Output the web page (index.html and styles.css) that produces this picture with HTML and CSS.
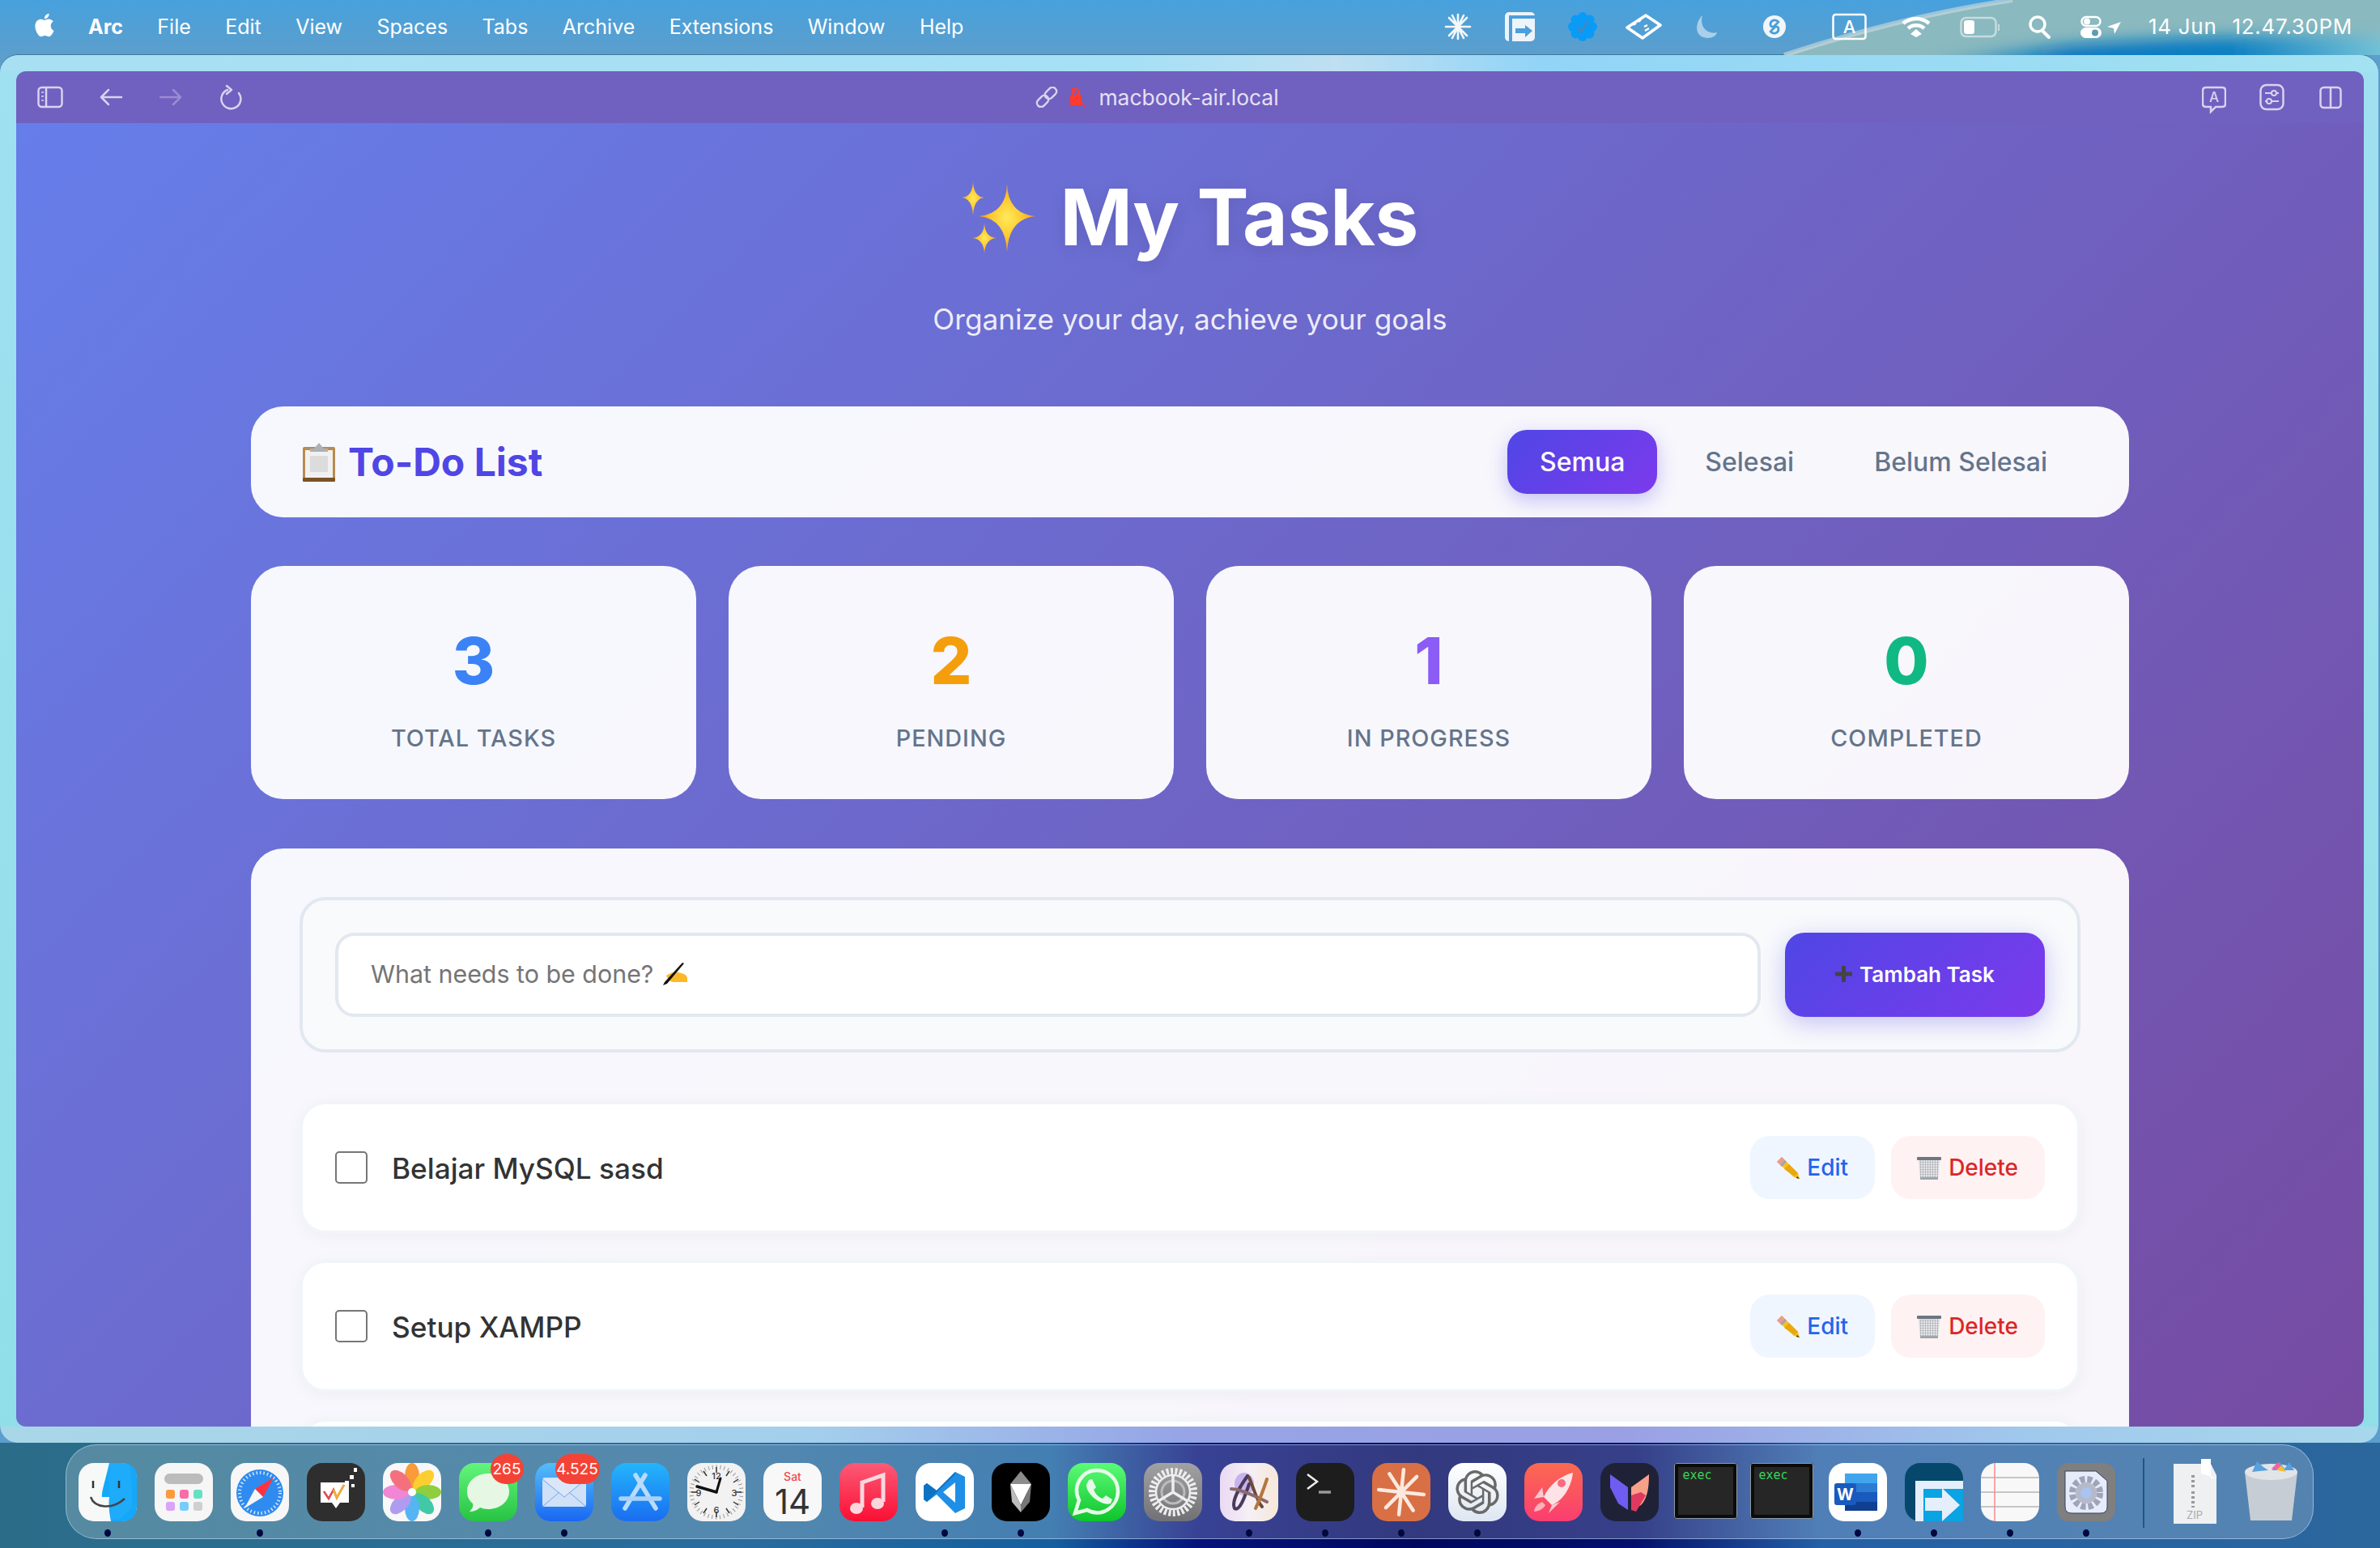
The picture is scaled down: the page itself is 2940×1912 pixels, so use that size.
FILE: index.html
```html
<!DOCTYPE html>
<html lang="en">
<head>
<meta charset="utf-8">
<title>My Tasks</title>
<link rel="stylesheet" href="styles.css">
</head>
<body>
<div class="desktop">
  <header class="menubar">
    <svg class="band" width="2940" height="68" viewBox="0 0 2940 68"><defs><filter id="soft" x="-20%" y="-100%" width="140%" height="300%"><feGaussianBlur stdDeviation="9"/></filter><linearGradient id="swoosh" x1="0" y1="0" x2="1" y2="0"><stop offset="0" stop-color="#0878c0" stop-opacity="0"/><stop offset=".3" stop-color="#0878c0"/><stop offset=".65" stop-color="#0f80c2"/><stop offset="1" stop-color="#7cc8d8"/></linearGradient></defs><path d="M2204 68C2290 40 2390 14 2486 0H2940V68Z" fill="#8ab9bf"/><path d="M2380 76C2540 50 2760 40 2960 46V90H2380Z" fill="url(#swoosh)" filter="url(#soft)"/><path d="M2204 68C2290 40 2390 14 2486 0" fill="none" stroke="#cfdde0" stroke-width="6" opacity=".6"/></svg>
    <svg class="apple" width="26" height="30" viewBox="3 1.5 18 21"><path fill="#fff" d="M18.71 19.5c-.83 1.24-1.71 2.45-3.05 2.47-1.34.03-1.77-.79-3.29-.79-1.53 0-2 .77-3.27.82-1.31.05-2.3-1.32-3.14-2.53C4.25 17 2.94 12.45 4.7 9.39c.87-1.52 2.43-2.48 4.12-2.51 1.28-.02 2.5.87 3.29.87.78 0 2.26-1.07 3.81-.91.65.03 2.47.26 3.64 1.98-.09.06-2.17 1.28-2.15 3.81.03 3.02 2.65 4.03 2.68 4.04-.03.07-.42 1.44-1.38 2.83M13 3.5c.73-.83 1.94-1.46 2.94-1.5.13 1.17-.34 2.35-1.04 3.19-.69.85-1.83 1.51-2.95 1.42-.15-1.15.41-2.35 1.05-3.11z"/></svg>
    <nav class="menus"><b>Arc</b><span>File</span><span>Edit</span><span>View</span><span>Spaces</span><span>Tabs</span><span>Archive</span><span>Extensions</span><span>Window</span><span>Help</span></nav>
    <div class="status">
      <svg width="75" height="68" viewBox="0 0 75 68"><g stroke="#f4f8fb" stroke-width="2.600" stroke-linecap="round"><path d="M17 18V48M2 33H32M6 22L28 44M6 44L28 22M10 19L24 47M24 19L10 47"/></g></svg>
      <svg width="78" height="68" viewBox="0 0 78 68"><rect x="0" y="15" width="37" height="36" rx="5" fill="#eef4fa"/><path d="M37 21H7V51" fill="none" stroke="#4a9fdc" stroke-width="4"/><path d="M13 35H25V31L34 38L25 46V41H13Z" fill="#4a9fdc"/></svg>
      <svg width="71" height="68" viewBox="0 0 71 68"><g fill="#0a9bf7"><circle cx="18" cy="33" r="14"/><circle cx="18" cy="21" r="6"/><circle cx="18" cy="45" r="6"/><circle cx="6" cy="33" r="6"/><circle cx="30" cy="33" r="6"/><circle cx="9.500" cy="24.500" r="6"/><circle cx="26.500" cy="24.500" r="6"/><circle cx="9.500" cy="41.500" r="6"/><circle cx="26.500" cy="41.500" r="6"/></g><path fill="none" stroke="#4388bf" stroke-width="3" d="M12 33L16 39L25 26"/></svg>
      <svg width="84" height="68" viewBox="0 0 84 68"><path fill="none" stroke="#fff" stroke-width="3.600" stroke-linejoin="round" d="M25 19L43 31L21 47L2 34Z"/><path d="M10 31L13 29M16 27L19 25" stroke="#fff" stroke-width="2"/><path d="M23 33L27 31M24 38L29 35" stroke="#fff" stroke-width="2.400"/></svg>
      <svg width="86" height="68" viewBox="0 0 86 68"><path fill="#a9d0e8" d="M11 19C2 27 0 46 17 47C24 47 28 44 29 40C17 43 7 33 11 19Z"/></svg>
      <svg width="85" height="68" viewBox="0 0 85 68"><circle cx="14" cy="33" r="14" fill="#f2f6fa"/><path fill="none" stroke="#4a9fdc" stroke-width="2.800" stroke-linecap="round" d="M19 27C15 23 9 25 9 30C9 33 12 34 14 32L18 28M9 39C13 43 19 41 19 36C19 33 16 32 14 34L10 38"/></svg>
      <svg width="86" height="68" viewBox="0 0 86 68"><rect x="1.500" y="18" width="40" height="30" rx="3" fill="none" stroke="#fff" stroke-width="2.500"/><text x="21.500" y="41" class="ltr">A</text></svg>
      <svg width="72" height="68" viewBox="0 0 72 68"><g fill="none" stroke="#fff" stroke-width="4.500"><path d="M2 29A24 24 0 0 1 34 29"/><path d="M8 35A15 15 0 0 1 28 35"/></g><path fill="#fff" d="M18 36L25 42L18 46L11 42Z"/></svg>
      <svg width="85" height="68" viewBox="0 0 85 68"><rect x="1.500" y="22" width="43" height="23" rx="6" fill="none" stroke="#c5dce0" stroke-width="2.500"/><rect x="5" y="25" width="13" height="17" rx="3" fill="#fff"/><rect x="47" y="30" width="2" height="8" fill="#c5dce0"/></svg>
      <svg width="64" height="68" viewBox="0 0 64 68"><circle cx="11" cy="30" r="9" fill="none" stroke="#fff" stroke-width="3.500"/><path d="M17 38L25 46" stroke="#fff" stroke-width="4" stroke-linecap="round"/></svg>
      <svg width="84" height="68" viewBox="0 0 84 68"><rect x="1.500" y="21" width="23" height="11" rx="5.500" fill="none" stroke="#fff" stroke-width="2.500"/><circle cx="8" cy="26.500" r="4" fill="#fff"/><rect x="0" y="34" width="26" height="13" rx="6.500" fill="#fff"/><circle cx="18" cy="40.500" r="4" fill="#5d9cb5"/><path fill="#fff" d="M50 27L33 33L41 35L42 42Z"/></svg>
      <time class="clock"><span>14 Jun</span><span>12.47.30PM</span></time>
    </div>
  </header>

  <section class="window">
    <div class="browser">
      <div class="toolbar">
        <div class="tools">
          <svg width="76" height="64" viewBox="0 0 76 64"><rect x="1.500" y="20" width="29" height="24" rx="4" fill="none" stroke="#d9d2f0" stroke-width="2.500"/><path d="M11 20V44" stroke="#d9d2f0" stroke-width="2.500"/><path d="M5 26H8M5 31H8M5 36H8" stroke="#d9d2f0" stroke-width="1.500"/></svg>
          <svg width="75" height="64" viewBox="0 0 75 64"><path d="M3 32H28M12 23L3 32L12 41" fill="none" stroke="#d9d2f0" stroke-width="2.500" stroke-linecap="round" stroke-linejoin="round"/></svg>
          <svg width="74" height="64" viewBox="0 0 74 64"><path d="M1 32H26M17 23L26 32L17 41" fill="none" stroke="#9a8bd4" stroke-width="2.500" stroke-linecap="round" stroke-linejoin="round"/></svg>
          <svg width="30" height="64" viewBox="0 0 30 64"><path d="M10 23A12 12 0 1 0 24 27M9 18L15 23L9 28" fill="none" stroke="#d9d2f0" stroke-width="2.500" stroke-linecap="round" stroke-linejoin="round"/></svg>
        </div>
        <div class="url">
          <svg width="28" height="26" viewBox="0 0 28 26"><g fill="none" stroke="#d9d2f0" stroke-width="2.500" transform="rotate(-45 14 13)"><rect x="-1" y="8" width="16" height="10" rx="5"/><rect x="13" y="8" width="16" height="10" rx="5"/></g></svg>
          <svg class="lock" width="22" height="24" viewBox="0 0 22 24"><rect x="2" y="10" width="14" height="12" fill="#ff3b30"/><path d="M5 10V6A4 4 0 0 1 13 6V10" fill="none" stroke="#ff3b30" stroke-width="2.500"/><path d="M4 0L20 24" stroke="#ff3b30" stroke-width="1.500"/></svg>
          <span>macbook-air.local</span>
        </div>
        <div class="tools tools-right">
          <svg width="30" height="64" viewBox="0 0 30 64"><path d="M5 20H25Q29 20 29 24V40Q29 44 25 44H17L11 50V44H5Q1 44 1 40V24Q1 20 5 20Z" fill="none" stroke="#d9d2f0" stroke-width="2.500"/><text x="15" y="38" class="ltr-small">A</text></svg>
          <svg width="31" height="64" viewBox="0 0 31 64"><rect x="1.500" y="17" width="28" height="30" rx="7" fill="none" stroke="#d9d2f0" stroke-width="2.500"/><path d="M7 27H24M7 37H24" stroke="#d9d2f0" stroke-width="2"/><circle cx="18" cy="27" r="3" fill="#7060bf" stroke="#d9d2f0" stroke-width="2"/><circle cx="12" cy="37" r="3" fill="#7060bf" stroke="#d9d2f0" stroke-width="2"/></svg>
          <svg width="28" height="64" viewBox="0 0 28 64"><rect x="1.500" y="20" width="25" height="25" rx="4" fill="none" stroke="#d9d2f0" stroke-width="2.500"/><path d="M14 20V45" stroke="#d9d2f0" stroke-width="2.500"/></svg>
        </div>
      </div>

      <main class="page">
        <div class="container">
          <div class="hero">
            <h1 class="hero-title">
              <svg width="92" height="90" viewBox="0 0 92 90"><defs><radialGradient id="spark"><stop offset="0" stop-color="#ffe95c"/><stop offset=".55" stop-color="#ffc92e"/><stop offset="1" stop-color="#f39a1c"/></radialGradient></defs><path fill="url(#spark)" d="M56 4Q57 41 91 44Q58 47 56 88Q54 47 21 44Q55 41 56 4Z"/><path fill="url(#spark)" d="M14 1Q14.500 20 28 21Q15 22 14 43Q13 22 0 21Q13.500 20 14 1Z"/><path fill="url(#spark)" d="M28 52Q28.500 70 43 71Q29 72 28 90Q27 72 13 71Q27.500 70 28 52Z"/></svg>
              <span>My Tasks</span>
            </h1>
            <p class="hero-sub">Organize your day, achieve your goals</p>
          </div>

          <div class="panel header-card">
            <h2 class="list-title">
              <svg width="42" height="48" viewBox="0 0 42 48"><rect x="1" y="5" width="40" height="43" rx="2" fill="#b88c4f"/><rect x="1" y="43" width="40" height="5" rx="1" fill="#7a5428"/><rect x="4" y="9" width="34" height="34" fill="#f1f1f1"/><rect x="10" y="16" width="22" height="20" fill="#dcdcdc"/><path d="M21 0L27 7H32V11H10V7H15Z" fill="#aab1b8"/></svg>
              <span>To-Do List</span>
            </h2>
            <div class="filters">
              <a class="filter filter-active">Semua</a>
              <a class="filter">Selesai</a>
              <a class="filter">Belum Selesai</a>
            </div>
          </div>

          <div class="stats">
            <div class="panel stat"><div class="stat-num num-blue">3</div><div class="stat-label">Total Tasks</div></div>
            <div class="panel stat"><div class="stat-num num-amber">2</div><div class="stat-label">Pending</div></div>
            <div class="panel stat"><div class="stat-num num-violet">1</div><div class="stat-label">In Progress</div></div>
            <div class="panel stat"><div class="stat-num num-green">0</div><div class="stat-label">Completed</div></div>
          </div>

          <div class="panel main-card">
            <form class="add-form">
              <div class="add-input">
                <span>What needs to be done?</span>
                <svg width="31" height="28" viewBox="0 0 31 28"><path d="M5 16C10 12 16 11 20 12L24 13C27 14 30 15 31 19V24H14C10 24 7 21 5 16Z" fill="#fbb829"/><path d="M1 28L3 24L25 0L27 1L6 26Z" fill="#111"/></svg>
              </div>
              <button class="add-btn" type="button">
                <svg width="21" height="20" viewBox="0 0 21 20"><path d="M8 0H13V7.500H21V12.500H13V20H8V12.500H0V7.500H8Z" fill="#444"/></svg>
                <span>Tambah Task</span>
              </button>
            </form>

            <ul class="tasks">
              <li class="task">
                <input class="task-check" type="checkbox" aria-label="Belajar MySQL sasd">
                <span class="task-name">Belajar MySQL sasd</span>
                <div class="task-actions">
                  <a class="btn btn-edit"><svg width="29" height="28" viewBox="0 0 29 28"><path d="M1 7L7 1L27 21L29 28L22 26Z" fill="#f8c01c"/><path d="M1 7L7 1L11 5L5 11Z" fill="#e99a9a"/><path d="M5 11L11 5L13 7L7 13Z" fill="#9aa5ad"/><path d="M10 16L16 10L27 21L23 25Z" fill="#e8a80e"/><path d="M26 25L29 28L25 27Z" fill="#222"/></svg><span>Edit</span></a>
                  <a class="btn btn-del"><svg width="30" height="29" viewBox="0 0 30 29"><defs><pattern id="mesh" width="3" height="3" patternUnits="userSpaceOnUse"><rect width="3" height="3" fill="#e3e5e7"/><circle cx="1.500" cy="1.500" r=".9" fill="#9ea3a8"/></pattern></defs><path d="M2 4H28L26 29H4Z" fill="url(#mesh)"/><rect x="0" y="1" width="30" height="4" rx="1" fill="#6d7780"/><rect x="4" y="26" width="22" height="3" rx="1" fill="#9fa6ac"/></svg><span>Delete</span></a>
                </div>
              </li>
              <li class="task">
                <input class="task-check" type="checkbox" aria-label="Setup XAMPP">
                <span class="task-name">Setup XAMPP</span>
                <div class="task-actions">
                  <a class="btn btn-edit"><svg width="29" height="28" viewBox="0 0 29 28"><path d="M1 7L7 1L27 21L29 28L22 26Z" fill="#f8c01c"/><path d="M1 7L7 1L11 5L5 11Z" fill="#e99a9a"/><path d="M5 11L11 5L13 7L7 13Z" fill="#9aa5ad"/><path d="M10 16L16 10L27 21L23 25Z" fill="#e8a80e"/><path d="M26 25L29 28L25 27Z" fill="#222"/></svg><span>Edit</span></a>
                  <a class="btn btn-del"><svg width="30" height="29" viewBox="0 0 30 29"><path d="M2 4H28L26 29H4Z" fill="url(#mesh)"/><rect x="0" y="1" width="30" height="4" rx="1" fill="#6d7780"/><rect x="4" y="26" width="22" height="3" rx="1" fill="#9fa6ac"/></svg><span>Delete</span></a>
                </div>
              </li>
              <li class="task"></li>
            </ul>
          </div>
        </div>
      </main>
    </div>
  </section>

  <footer class="dock">
    <div class="cell on"><svg class="ico" viewBox="0 0 72 72"><rect width="72" height="72" rx="19" fill="#f7f8f8"/><path d="M38 0H53Q72 0 72 19V53Q72 72 53 72H40C38 62 37 52 38 42H29C28 36 33 22 38 0Z" fill="#14a8fb"/><path d="M38 0H53Q60 0 64 4L66 30V55L50 70H40C38 62 37 52 38 42Z" fill="#27aef9" opacity=".5"/><path d="M15 42C20 56 42 58 57 44" fill="none" stroke="#444" stroke-width="2.500"/><path d="M18 22V31M50 22V31" stroke="#333" stroke-width="2.500"/></svg></div>
    <div class="cell"><svg class="ico" viewBox="0 0 72 72"><rect width="72" height="72" rx="19" fill="#f6f6f6"/><rect x="12" y="13" width="48" height="13" rx="6.500" fill="#bcbcbc"/><g><rect x="14" y="33" width="11" height="11" rx="3" fill="#fb9a3c"/><rect x="31" y="33" width="11" height="11" rx="3" fill="#f76ca9"/><rect x="48" y="33" width="11" height="11" rx="3" fill="#66e0c4"/><rect x="14" y="48" width="11" height="11" rx="3" fill="#d9a4f9"/><rect x="31" y="48" width="11" height="11" rx="3" fill="#77cdfa"/><rect x="48" y="48" width="11" height="11" rx="3" fill="#cfcfcf"/></g></svg></div>
    <div class="cell on"><svg class="ico" viewBox="0 0 72 72"><rect width="72" height="72" rx="19" fill="#f7f7f7"/><circle cx="36" cy="37" r="29" fill="#2f8bf0"/><circle cx="36" cy="37" r="25" fill="none" stroke="#d6e9fb" stroke-width="4" stroke-dasharray="1.500 3"/><path d="M53 18L30 32L40 42Z" fill="#ff3340"/><path d="M17 56L30 32L40 42Z" fill="#f5f5f5"/></svg></div>
    <div class="cell"><svg class="ico" viewBox="0 0 72 72"><rect width="72" height="72" rx="19" fill="#2e2e2e"/><path d="M17 24H52V49H41L36 56L31 49H17Z" fill="#fff"/><path d="M21 35L27 44L33 33L37 43L46 27" fill="none" stroke="#e0484f" stroke-width="2.500"/><path d="M33 33L37 43L46 27" fill="none" stroke="#f0b030" stroke-width="2.500"/><path d="M47 22h5v5h-5zM53 15h5v5h-5zM55 26h4v4h-4zM58 6h4v5h-4z" fill="#fff"/></svg></div>
    <div class="cell"><svg class="ico" viewBox="0 0 72 72"><rect width="72" height="72" rx="19" fill="#f8f8f8"/><g transform="translate(36 36)" opacity=".85"><ellipse cy="-20" rx="9" ry="16" fill="#f98b17"/><ellipse cy="-20" rx="9" ry="16" fill="#fdc70e" transform="rotate(45)"/><ellipse cy="-20" rx="9" ry="16" fill="#7dc81e" transform="rotate(90)"/><ellipse cy="-20" rx="9" ry="16" fill="#22c19a" transform="rotate(135)"/><ellipse cy="-20" rx="9" ry="16" fill="#3aa9f3" transform="rotate(180)"/><ellipse cy="-20" rx="9" ry="16" fill="#a38cf0" transform="rotate(225)"/><ellipse cy="-20" rx="9" ry="16" fill="#f073d0" transform="rotate(270)"/><ellipse cy="-20" rx="9" ry="16" fill="#f5596a" transform="rotate(315)"/><circle r="5" fill="#fff"/></g></svg></div>
    <div class="cell on"><svg class="ico" viewBox="0 0 72 72"><defs><linearGradient id="g-msg" x1="0" y1="0" x2="0" y2="1"><stop offset="0" stop-color="#63f57c"/><stop offset="1" stop-color="#28c343"/></linearGradient></defs><rect width="72" height="72" rx="19" fill="url(#g-msg)"/><path d="M36 13C50 13 62 22 62 35C62 48 50 57 36 57C32 57 29 56 26 55C23 58 18 60 13 60C16 57 18 54 17 50C12 46 10 41 10 35C10 22 22 13 36 13Z" fill="#e6f8e4"/></svg><b class="badge">265</b></div>
    <div class="cell on"><svg class="ico" viewBox="0 0 72 72"><defs><linearGradient id="g-mail" x1="0" y1="0" x2="0" y2="1"><stop offset="0" stop-color="#55bdf8"/><stop offset="1" stop-color="#1967f2"/></linearGradient></defs><rect width="72" height="72" rx="19" fill="url(#g-mail)"/><rect x="9" y="18" width="54" height="36" rx="3" fill="#cfe0f7"/><path d="M9 20L36 42L63 20" fill="#dbe7f9" stroke="#6fa6ee"/><path d="M9 54L30 36M63 54L42 36" stroke="#6fa6ee" fill="none"/></svg><b class="badge badge-wide">4.525</b></div>
    <div class="cell"><svg class="ico" viewBox="0 0 72 72"><defs><linearGradient id="g-app" x1="0" y1="0" x2="0" y2="1"><stop offset="0" stop-color="#24b5fb"/><stop offset="1" stop-color="#1a6df0"/></linearGradient></defs><rect width="72" height="72" rx="19" fill="url(#g-app)"/><g stroke-width="5.500" stroke-linecap="round" fill="none"><path d="M42 15L17 56M30 15L55 56" stroke="#b8dcfb"/><path d="M12 44H60" stroke="#a9d2fa"/></g></svg></div>
    <div class="cell"><svg class="ico" viewBox="0 0 72 72"><rect width="72" height="72" rx="19" fill="#f2f2f2"/><circle cx="36" cy="36" r="31" fill="none" stroke="#999" stroke-width="5" stroke-dasharray="1 3.850"/><path d="M36 5V12M36 60V67M5 36H12M60 36H67M20 10L24 16M52 10L48 16M20 62L24 56M52 62L48 56M9 20L15 24M63 20L57 24M9 52L15 48M63 52L57 48" stroke="#333" stroke-width="1.500"/><text x="36" y="20" class="clk">12</text><text x="58" y="41" class="clk">3</text><text x="36" y="62" class="clk">6</text><text x="14" y="41" class="clk">9</text><path d="M36 36L12 29" stroke="#111" stroke-width="3.500" stroke-linecap="round"/><path d="M36 36L41 19" stroke="#111" stroke-width="3" stroke-linecap="round"/></svg></div>
    <div class="cell"><svg class="ico" viewBox="0 0 72 72"><rect width="72" height="72" rx="19" fill="#f8f8f8"/><text x="36" y="22" class="cal-day">Sat</text><text x="36" y="63" class="cal-num">14</text></svg></div>
    <div class="cell"><svg class="ico" viewBox="0 0 72 72"><defs><linearGradient id="g-mus" x1="0" y1="0" x2="0" y2="1"><stop offset="0" stop-color="#fb5b76"/><stop offset="1" stop-color="#fb0f34"/></linearGradient></defs><rect width="72" height="72" rx="19" fill="url(#g-mus)"/><path d="M28 24L54 15V48" fill="none" stroke="#fbd7dd" stroke-width="5"/><path d="M28 22V55" stroke="#fbd7dd" stroke-width="5"/><ellipse cx="21" cy="56" rx="8" ry="7" fill="#fbd7dd"/><ellipse cx="47" cy="50" rx="8" ry="7" fill="#fbd7dd"/></svg></div>
    <div class="cell on"><svg class="ico" viewBox="0 0 72 72"><rect width="72" height="72" rx="19" fill="#fff"/><path d="M49 11L61 17V56L49 62L26 39L14 48L10 45V28L14 25L26 34ZM49 24L34 36L49 49Z" fill="#1d8fe6"/><path d="M49 11L26 34L14 25L10 28V45L14 48L49 14Z" fill="#0e72c4"/></svg></div>
    <div class="cell on"><svg class="ico" viewBox="0 0 72 72"><rect width="72" height="72" rx="19" fill="#000"/><path d="M36 10L49 26L36 28L23 26Z" fill="#8c8c8c"/><path d="M23 26L49 26L36 52Z" fill="#fff"/><path d="M49 26L47 48L36 61L36 52Z" fill="#777"/><path d="M23 26L36 52V61L25 48Z" fill="#bdbdbd"/></svg></div>
    <div class="cell"><svg class="ico" viewBox="0 0 72 72"><defs><linearGradient id="g-wa" x1="0" y1="0" x2="0" y2="1"><stop offset="0" stop-color="#5cfb78"/><stop offset="1" stop-color="#0dc52a"/></linearGradient></defs><rect width="72" height="72" rx="19" fill="url(#g-wa)"/><path d="M9 62L14 46C5 28 18 9 36 9C50 9 62 20 62 35C62 54 42 68 24 58Z" fill="none" stroke="#e7fae9" stroke-width="4.500"/><path d="M26 21L30 20L35 30L32 33C34 38 38 42 43 44L47 40L55 45L53 50C44 54 23 40 23 27Z" fill="#e7fae9"/></svg></div>
    <div class="cell"><svg class="ico" viewBox="0 0 72 72"><defs><linearGradient id="g-set" x1="0" y1="0" x2="0" y2="1"><stop offset="0" stop-color="#a2a2a5"/><stop offset="1" stop-color="#717175"/></linearGradient></defs><rect width="72" height="72" rx="19" fill="url(#g-set)"/><circle cx="36" cy="36" r="26" fill="none" stroke="#eee" stroke-width="8" stroke-dasharray="3 2.400"/><circle cx="36" cy="36" r="21" fill="none" stroke="#eee" stroke-width="2.500"/><circle cx="36" cy="36" r="14" fill="none" stroke="#bbb" stroke-width="3"/><path d="M36 36V15M36 36L18 47M36 36L54 47" stroke="#eee" stroke-width="3.500"/></svg></div>
    <div class="cell on"><svg class="ico" viewBox="0 0 72 72"><defs><linearGradient id="g-ai" x1="0" y1="0" x2="1" y2="0"><stop offset="0" stop-color="#ead9f3"/><stop offset=".5" stop-color="#f5f0f5"/><stop offset="1" stop-color="#f6e7d9"/></linearGradient></defs><rect width="72" height="72" rx="19" fill="url(#g-ai)"/><ellipse cx="30" cy="26" rx="12" ry="14" fill="#c9b2ec"/><g fill="none" stroke-width="4" stroke-linecap="round"><path d="M34 16C24 30 14 48 18 56C24 60 30 44 36 26" stroke="#4a3a5c"/><path d="M36 18C42 32 46 48 52 54" stroke="#6a4a3a"/><path d="M14 32C26 32 46 42 58 48" stroke="#8a6a6a"/><path d="M58 20C54 32 48 48 44 56" stroke="#b5763c"/></g></svg></div>
    <div class="cell on"><svg class="ico" viewBox="0 0 72 72"><rect width="72" height="72" rx="19" fill="#1d1d1d"/><path d="M14 14L26 23L14 32" fill="none" stroke="#eee" stroke-width="2.500"/><path d="M28 36H43" stroke="#999" stroke-width="3.500"/></svg></div>
    <div class="cell on"><svg class="ico" viewBox="0 0 72 72"><rect width="72" height="72" rx="19" fill="#d96f45"/><g stroke="#fbe9df" stroke-linecap="round" stroke-width="4.500" transform="translate(36 36) rotate(6)"><path d="M0-28V28M-28 0H28M-17-21L17 21M-17 21L17-21"/></g></svg></div>
    <div class="cell on"><svg class="ico" viewBox="0 0 72 72"><defs><linearGradient id="g-gpt" x1="0" y1="0" x2="0" y2="1"><stop offset="0" stop-color="#fff"/><stop offset="1" stop-color="#dde6f2"/></linearGradient></defs><rect width="72" height="72" rx="19" fill="url(#g-gpt)"/><path transform="translate(9 9) scale(2.250)" fill="#696969" d="M22.2819 9.8211a5.9847 5.9847 0 0 0-.5157-4.9108 6.0462 6.0462 0 0 0-6.5098-2.9A6.0651 6.0651 0 0 0 4.9807 4.1818a5.9847 5.9847 0 0 0-3.9977 2.9 6.0462 6.0462 0 0 0 .7427 7.0966 5.98 5.98 0 0 0 .511 4.9107 6.051 6.051 0 0 0 6.5146 2.9001A5.9847 5.9847 0 0 0 13.2599 24a6.0557 6.0557 0 0 0 5.7718-4.2058 5.9894 5.9894 0 0 0 3.9977-2.9001 6.0557 6.0557 0 0 0-.7475-7.0729zm-9.022 12.6081a4.4755 4.4755 0 0 1-2.8764-1.0408l.1419-.0804 4.7783-2.7582a.7948.7948 0 0 0 .3927-.6813v-6.7369l2.02 1.1686a.071.071 0 0 1 .038.052v5.5826a4.504 4.504 0 0 1-4.4945 4.4944zm-9.6607-4.1254a4.4708 4.4708 0 0 1-.5346-3.0137l.142.0852 4.783 2.7582a.7712.7712 0 0 0 .7806 0l5.8428-3.3685v2.3324a.0804.0804 0 0 1-.0332.0615L9.74 19.9502a4.4992 4.4992 0 0 1-6.1408-1.6464zM2.3408 7.8956a4.485 4.485 0 0 1 2.3655-1.9728V11.6a.7664.7664 0 0 0 .3879.6765l5.8144 3.3543-2.0201 1.1685a.0757.0757 0 0 1-.071 0l-4.8303-2.7865A4.504 4.504 0 0 1 2.3408 7.872zm16.5963 3.8558L13.1038 8.364 15.1192 7.2a.0757.0757 0 0 1 .071 0l4.8303 2.7913a4.4944 4.4944 0 0 1-.6765 8.1042v-5.6772a.79.79 0 0 0-.407-.667zm2.0107-3.0231l-.142-.0852-4.7735-2.7818a.7759.7759 0 0 0-.7854 0L9.409 9.2297V6.8974a.0662.0662 0 0 1 .0284-.0615l4.8303-2.7866a4.4992 4.4992 0 0 1 6.6802 4.66zM8.3065 12.863l-2.02-1.1638a.0804.0804 0 0 1-.038-.0567V6.0742a4.4992 4.4992 0 0 1 7.3757-3.4537l-.142.0805L8.704 5.459a.7948.7948 0 0 0-.3927.6813zm1.0976-2.3654l2.602-1.4998 2.6069 1.4998v2.9994l-2.5974 1.4997-2.6067-1.4997Z"/></svg></div>
    <div class="cell"><svg class="ico" viewBox="0 0 72 72"><defs><linearGradient id="g-rkt" x1="0" y1="0" x2="0" y2="1"><stop offset="0" stop-color="#fb6a50"/><stop offset="1" stop-color="#fb3d70"/></linearGradient></defs><rect width="72" height="72" rx="19" fill="url(#g-rkt)"/><path d="M60 12C44 16 30 28 24 42L34 52C48 46 58 30 60 12Z" fill="#fde3e6"/><circle cx="46" cy="25" r="5" fill="#f76b80"/><path d="M24 42L12 44L22 30ZM34 52L30 62L44 48Z" fill="#fbc9d0"/><path d="M22 48C16 50 12 56 12 60C18 60 24 56 26 52Z" fill="#fdb0bb"/></svg></div>
    <div class="cell"><svg class="ico" viewBox="0 0 72 72"><rect width="72" height="72" rx="19" fill="#1f2236"/><path d="M12 14L34 30V58L22 50L12 30Z" fill="#6f5cf0"/><path d="M60 14L38 30V58L50 52C58 44 60 30 60 14Z" fill="#f9a08a"/><path d="M38 40L50 36L56 40L44 60L38 58Z" fill="#e0395f"/></svg></div>
    <div class="cell"><div class="exec"><span>exec</span></div></div>
    <div class="cell"><div class="exec"><span>exec</span></div></div>
    <div class="cell on"><svg class="ico" viewBox="0 0 72 72"><rect width="72" height="72" rx="19" fill="#fff"/><rect x="20" y="13" width="40" height="46" rx="3" fill="#2b7cd3"/><rect x="20" y="13" width="40" height="12" fill="#41a5ee"/><rect x="20" y="36" width="40" height="12" fill="#185abd"/><rect x="20" y="48" width="40" height="11" fill="#103f91"/><rect x="7" y="25" width="27" height="27" rx="3" fill="#185abd"/><text x="20.500" y="46" class="wrd">W</text></svg></div>
    <div class="cell on"><svg class="ico" viewBox="0 0 72 72"><rect width="72" height="72" rx="19" fill="#06486b"/><path d="M13 72V22H72V72Z" fill="#e4effb"/><path d="M23 32H72V72H23Z" fill="#0aa3e4"/><path d="M23 32V72H13V24H72V32Z" fill="#e4effb"/><path d="M25 43H46V31L68 52L46 72V59H25Z" fill="#e4effb"/><path d="M25 59V72H42V59Z" fill="#0aa3e4"/></svg></div>
    <div class="cell on"><svg class="ico" viewBox="0 0 72 72"><rect width="72" height="72" rx="19" fill="#f8f8f8"/><path d="M0 18H72M0 36H72M0 54H72" stroke="#c6c6c6" stroke-width="2"/><path d="M17 0V72" stroke="#f98c8c" stroke-width="1.500"/></svg></div>
    <div class="cell on"><svg class="ico" viewBox="0 0 72 72"><rect width="72" height="72" rx="14" fill="#7f7f7f"/><path d="M10 10H48L62 22V54Q62 62 54 62H18Q10 62 10 54Z" fill="#e6ecfa" stroke="#34405f" stroke-width="1"/><circle cx="36" cy="37" r="17" fill="none" stroke="#9fa4b8" stroke-width="8" stroke-dasharray="6 3"/><circle cx="36" cy="37" r="13" fill="#b5b9c9"/><circle cx="36" cy="37" r="7" fill="#a9c4ef"/></svg></div>
    <div class="divider"></div>
    <div class="cell"><svg class="file-ico" width="53" height="82" viewBox="0 0 53 82"><path d="M0 6H46L53 20V80H0Z" fill="#eef0f2"/><path d="M34 0H46V24H53L34 18Z" fill="#fff"/><path d="M24 20V36M24 40V60" stroke="#999" stroke-width="4" stroke-dasharray="3 3"/><text x="26" y="74" class="zip">ZIP</text></svg></div>
    <div class="cell"><svg class="file-ico" width="67" height="76" viewBox="0 0 67 76"><path d="M1 16H66L59 76H8Z" fill="#c7cdd4"/><ellipse cx="33.500" cy="16" rx="32.500" ry="10" fill="#e2e5e8"/><path d="M10 16L16 3L24 10L30 14ZM34 14L44 4L50 12L56 4L62 14Z" fill="#5aa0dc"/><path d="M34 12L42 4L50 14Z" fill="#f45fa4"/><path d="M40 14L46 8L52 16Z" fill="#f4c034"/></svg></div>
  </footer>
</div>
</body>
</html>
```

FILE: styles.css
```css
* { box-sizing: border-box; }

html, body {
  margin: 0;
  width: 2940px;
  height: 1912px;
  overflow: hidden;
}

body {
  font-family: Inter, "Liberation Sans", sans-serif;
  background:
    linear-gradient(90deg, #2b6d88 0, #2a6c9c 900px, #155f9f 1300px, #07137a 1480px, #00085e 1750px, #04106c 2020px, #2560a6 2250px, #2b669c 2940px) 0 1782px / 100% 130px no-repeat,
    linear-gradient(180deg, #47a1dd 0, #5c9ecc 68px);
}

.desktop {
  display: flex;
  flex-direction: column;
  height: 1912px;
}

/* menu bar */
.menubar {
  position: relative;
  display: flex;
  align-items: center;
  height: 68px;
  padding: 0 0 0 42px;
  color: #fff;
  font-size: 25px;
  line-height: 1;
  flex: none;
  overflow: hidden;
}
.band { position: absolute; left: 0; top: 0; }
.apple { position: relative; margin-top: -6px; flex: none; }
.menus {
  position: relative;
  display: flex;
  gap: 42.4px;
  margin-left: 41px;
  margin-top: -2px;
}
.menus b { font-weight: 700; }
.status {
  position: relative;
  display: flex;
  align-items: center;
  margin-left: auto;
}
.status svg { display: block; flex: none; }
.clock {
  display: flex;
  gap: 19px;
  padding-right: 34px;
  margin-top: -2px;
  font-size: 26px;
  letter-spacing: .7px;
}
.ltr { fill: #fff; font: 500 22px Inter, sans-serif; text-anchor: middle; }
.ltr-small { fill: #d9d2f0; font: 500 17px Inter, sans-serif; text-anchor: middle; }

/* window */
.window {
  width: 2938px;
  height: 1714px;
  flex: none;
  padding: 20px 18px 20px 20px;
  border-radius: 22px;
  box-shadow: 0 -1px 0 #3f7797;
  background:
    linear-gradient(90deg, #a8dff3 0, #a6e0f6 1400px, #bfdff2 1650px, #92d4f7 1900px, #a3e2f1 2940px) 0 0 / 100% 20px no-repeat,
    linear-gradient(90deg, #a9d7e8 0, #a4cfec 1000px, #96a5e6 1450px, #9a9fe4 2000px, #a0c8ec 2500px, #a8d8ec 2940px) 0 100% / 100% 20px no-repeat,
    linear-gradient(180deg, #a0e0f0, #90dfe8);
}
.browser {
  display: flex;
  flex-direction: column;
  height: 100%;
  border-radius: 12px;
  overflow: hidden;
}

.toolbar {
  display: flex;
  align-items: center;
  height: 64px;
  flex: none;
  padding: 0 27px 0 26px;
  background: #7060bf;
}
.tools { display: flex; align-items: center; flex: 1; }
.tools-right { justify-content: flex-end; gap: 41px; }
.tools svg { display: block; }
.tools-right svg:nth-child(2) { margin-right: 2px; }
.url {
  display: flex;
  align-items: center;
  margin-right: 80px;
  color: #e6e0f5;
  font-size: 26.4px;
}
.url .lock { margin-left: 13px; margin-right: 15px; }

/* page */
.page {
  flex: 1;
  overflow: hidden;
  background: linear-gradient(135deg, #667eea 0%, #764ba2 100%);
}
.container {
  width: 2320px;
  margin: 0 auto;
  padding-top: 58px;
}
.hero { text-align: center; color: #fff; }
.hero-title {
  display: flex;
  align-items: center;
  justify-content: center;
  gap: 29px;
  margin: 0;
  font-size: 96px;
  font-weight: 700;
  line-height: 116px;
  letter-spacing: -.6px;
  text-shadow: 0 4px 20px rgba(0, 0, 0, .1);
}
.hero-sub {
  margin: 47px 0 0;
  font-size: 35.2px;
  line-height: 43px;
  letter-spacing: 0;
  color: rgba(255, 255, 255, .9);
}

.panel {
  background: rgba(255, 255, 255, .95);
  border-radius: 40px;
}
.header-card {
  display: flex;
  align-items: center;
  justify-content: space-between;
  height: 137px;
  margin-top: 86px;
  padding: 0 61px 0 63px;
}
.list-title {
  display: flex;
  align-items: center;
  gap: 15px;
  margin: 0;
  font-size: 48px;
  font-weight: 700;
  color: #4f46e5;
}
.filters { display: flex; align-items: center; gap: 19px; }
.filter {
  display: block;
  padding: 21px 40px;
  border-radius: 24px;
  font-size: 32px;
  line-height: 37px;
  font-weight: 500;
  color: #64748b;
}
.filter-active {
  color: #fff;
  background: linear-gradient(135deg, #4f46e5, #7c3aed);
  box-shadow: 0 8px 25px rgba(79, 70, 229, .3);
}

.stats {
  display: grid;
  grid-template-columns: repeat(4, 1fr);
  gap: 40px;
  margin-top: 60px;
}
.stat {
  height: 288px;
  padding-top: 68px;
  text-align: center;
}
.stat-num {
  font-size: 80px;
  line-height: 97px;
  font-weight: 800;
}
.num-blue { color: #3b82f6; }
.num-amber { color: #f59e0b; }
.num-violet { color: #8b5cf6; }
.num-green { color: #10b981; }
.stat-label {
  margin-top: 30px;
  font-size: 28.8px;
  line-height: 35px;
  font-weight: 500;
  letter-spacing: 1px;
  text-transform: uppercase;
  color: #64748b;
}

.main-card {
  margin-top: 61px;
  padding: 60px;
  height: 1200px;
}
.add-form {
  display: flex;
  gap: 30px;
  padding: 40px;
  background: #f8fafc;
  border: 4px solid #e2e8f0;
  border-radius: 32px;
}
.add-input {
  display: flex;
  align-items: center;
  gap: 11px;
  flex: 1;
  height: 104px;
  padding: 0 40px 2px;
  background: #fff;
  border: 4px solid #e2e8f0;
  border-radius: 24px;
  font-size: 30.4px;
  color: #757575;
}
.add-btn {
  display: flex;
  align-items: center;
  justify-content: center;
  gap: 9px;
  width: 321px;
  height: 104px;
  padding: 0 0 2px;
  border: 0;
  border-radius: 24px;
  font: 600 26px Inter, sans-serif;
  color: #fff;
  background: linear-gradient(135deg, #4f46e5, #7c3aed);
  box-shadow: 0 8px 30px rgba(79, 70, 229, .3);
}

.tasks {
  display: flex;
  flex-direction: column;
  gap: 32px;
  margin: 60px 0 0;
  padding: 0;
  list-style: none;
}
.task {
  display: flex;
  align-items: center;
  height: 164px;
  padding: 0 40px;
  background: #fff;
  border: 4px solid #f1f5f9;
  border-radius: 32px;
  box-shadow: 0 4px 20px rgba(0, 0, 0, .04);
}
.task-check {
  appearance: none;
  width: 40px;
  height: 40px;
  margin: 0 30px 0 0;
  flex: none;
  background: #fff;
  border: 2px solid #767676;
  border-radius: 5px;
}
.task-name {
  flex: 1;
  padding-top: 2px;
  font-size: 35.2px;
  font-weight: 500;
  color: #333;
}
.task-actions { display: flex; gap: 20px; }
.btn {
  display: flex;
  align-items: center;
  gap: 9px;
  height: 78px;
  padding: 0 33px 0 32px;
  border-radius: 24px;
  font-size: 28px;
  font-weight: 500;
}
.btn-edit { color: #2563eb; background: #eff6ff; }
.btn-del { color: #dc2626; background: #fef2f2; }

/* dock */
.dock {
  position: relative;
  display: flex;
  width: 2777px;
  height: 117px;
  flex: none;
  margin: 2px 0 0 81px;
  padding: 22px 0 0 3.5px;
  background: rgba(255, 255, 255, .2);
  border: 1.5px solid rgba(200, 225, 255, .55);
  border-radius: 38px;
}
.cell {
  position: relative;
  display: flex;
  justify-content: center;
  width: 94px;
  flex: none;
}
.ico { width: 72px; height: 72px; display: block; }
.on::after {
  content: "";
  position: absolute;
  left: 43px;
  top: 82px;
  width: 8px;
  height: 9px;
  border-radius: 50%;
  background: #00083f;
}
.badge {
  position: absolute;
  left: 50px;
  top: -11px;
  width: 41px;
  height: 37px;
  border-radius: 19px;
  background: #f44336;
  color: #fff;
  font: 400 19px/37px Inter, sans-serif;
  text-align: center;
}
.badge-wide { width: 55px; left: 36px; }
.exec {
  width: 78px;
  height: 69px;
  padding: 5px 6px;
  border: 5px solid #0b0b0b;
  outline: 1px solid #8d9aa5;
  outline-offset: -1px;
  border-radius: 3px;
  background: #262626;
  color: #36d65a;
  font: 15px/16px "DejaVu Sans Mono", monospace;
}
.exec span { display: block; margin-top: -3px; }
.divider {
  width: 2px;
  height: 86px;
  margin: -6px 16px 0 23px;
  flex: none;
  background: #1d5788;
}
.file-ico { display: block; margin-top: -5px; }
.clk { font: 500 11px Inter, sans-serif; fill: #333; text-anchor: middle; }
.cal-day { font: 500 14px Inter, sans-serif; fill: #f0494f; text-anchor: middle; }
.cal-num { font: 400 42px Inter, sans-serif; fill: #333; text-anchor: middle; }
.wrd { font: 700 20px Inter, sans-serif; fill: #fff; text-anchor: middle; }
.zip { font: 400 13px Inter, sans-serif; fill: #aaa; text-anchor: middle; }
```
